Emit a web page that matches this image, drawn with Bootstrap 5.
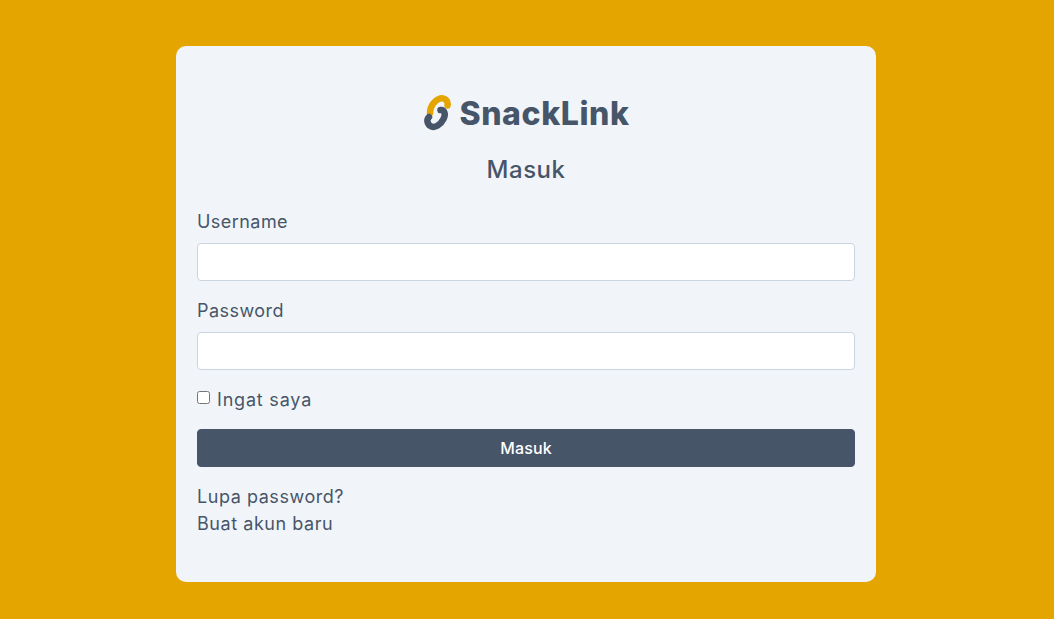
<!DOCTYPE html>
<html lang="id"><head><meta charset="utf-8"><title>SnackLink</title>
<link href="https://cdn.jsdelivr.net/npm/bootstrap@5.3.0/dist/css/bootstrap.min.css" rel="stylesheet">
<style>
body{background:#e5a500;font-family:Inter,"Liberation Sans",sans-serif;color:#475569;font-size:18px;line-height:27px;min-height:100vh;padding-right:2px}
.login-panel{width:700px;height:536px;margin:46px auto 0;background:#f1f5f9;border-radius:10px;padding:45px 21px}
.brand-row{height:46px;gap:7px}
.brand-name{font-weight:800;font-size:32px;line-height:46px;color:#475569;letter-spacing:.6px}
.page-title{font-size:24px;font-weight:500;line-height:34px;color:#475569;margin:16px 0 21px;text-align:center;letter-spacing:.5px}
.field-label{margin-bottom:8px;display:block;color:#475569;letter-spacing:.45px}
.field-input{height:38px;border:1px solid #cbd5e1;border-radius:4px;background:#fff}
.remember{height:27px;gap:7px}
.remember input{width:13px;height:13px;margin:0 0 4px}
.remember label{letter-spacing:.8px}
.submit-btn{height:38px;background:#475569;border-color:#475569;color:#fff;font-size:16px;font-weight:500;border-radius:4px;padding:0;letter-spacing:.1px}
.plain-link{color:#475569;text-decoration:none;display:block;letter-spacing:.55px}
</style></head><body>
<div class="login-panel">
<div class="brand-row d-flex justify-content-center align-items-center">
<svg width="30" height="38" viewBox="0 2 30 38" fill="none" stroke-linecap="round"><path d="M8 20C8 13 13 7 18 5.500C23 4.500 26.500 8 25.500 12.500" stroke="#e5a500" stroke-width="6.500"/><path d="M18.500 17C22.500 16.500 24 21 21.500 26C18.500 32 13 35 9.500 33.500C5.500 32 4 27 7 24" stroke="#475569" stroke-width="6.500"/></svg>
<span class="brand-name">SnackLink</span></div>
<h1 class="page-title">Masuk</h1>
<form>
<div class="mb-3"><label class="field-label" for="u">Username</label><input id="u" class="form-control field-input" type="text"></div>
<div class="mb-3"><label class="field-label" for="p">Password</label><input id="p" class="form-control field-input" type="password"></div>
<div class="remember d-flex align-items-center mb-3"><input id="r" type="checkbox"><label for="r">Ingat saya</label></div>
<button type="button" class="btn submit-btn w-100 mb-3 d-block">Masuk</button>
<a class="plain-link" href="#">Lupa password?</a><a class="plain-link" href="#">Buat akun baru</a>
</form></div>
<script src="https://cdn.jsdelivr.net/npm/bootstrap@5.3.0/dist/js/bootstrap.bundle.min.js"></script>
</body></html>
